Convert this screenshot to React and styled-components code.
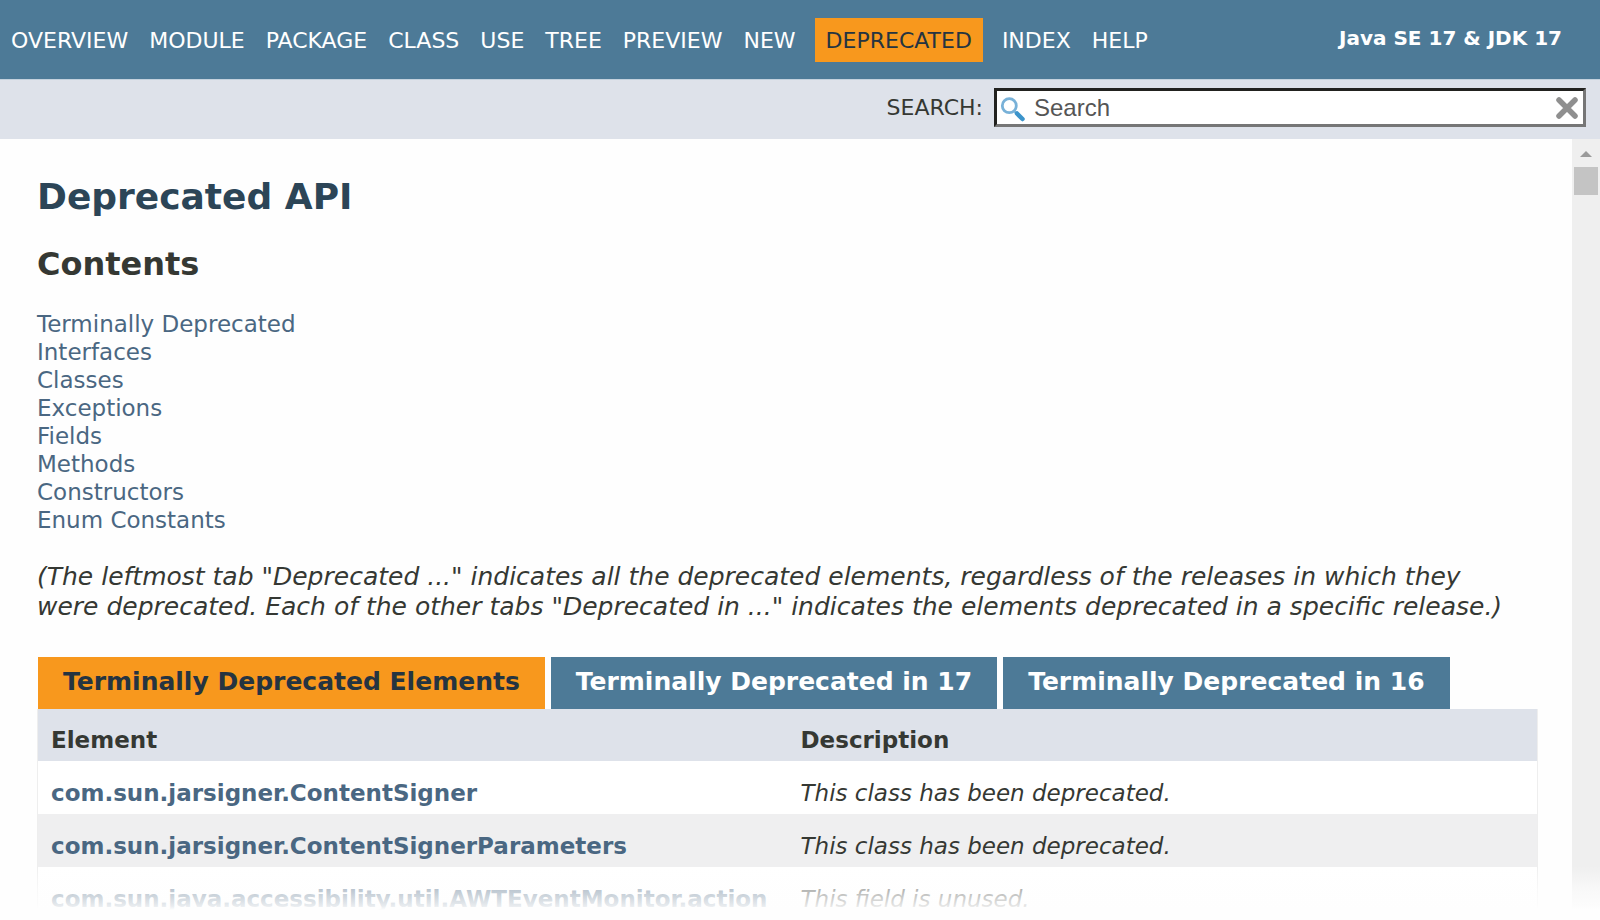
import React from "react";
import styled, { createGlobalStyle } from "styled-components";

const sans = '"DejaVu Sans", Arial, Helvetica, sans-serif';

const GlobalStyle = createGlobalStyle`
  *, *::before, *::after { box-sizing: border-box; }
  body {
    margin: 0;
    background: #fefefe;
    color: #353833;
    font-family: ${sans};
    font-size: 23px;
  }
`;

const Page = styled.div`
  position: relative;
  display: flex;
  flex-direction: column;
  height: 100vh;
  overflow: hidden;
`;

const TopBar = styled.header`
  display: flex;
  align-items: center;
  justify-content: space-between;
  flex: none;
  height: 80px;
  padding-right: 38px;
  border-bottom: 1px solid #c3d1dd;
  background: #4d7a97;
  color: #fff;
`;

const NavList = styled.ul`
  display: flex;
  align-items: center;
  gap: 21px;
  margin: 0;
  padding: 0 0 0 11px;
  list-style: none;
  font-size: 22px;
  line-height: 42px;
`;

const NavItem = styled.li`
  padding-top: 2px;
  ${(p) => p.$current && `
    margin: 0 -2px;
    padding: 2px 11px 0;
    background: #f8981d;
    color: #253441;
  `}
`;

const NavLink = styled.a`
  color: inherit;
  text-decoration: none;
`;

const Product = styled.strong`
  padding-bottom: 4px;
  font-size: 20px;
  line-height: 24px;
  white-space: nowrap;
`;

const SearchBar = styled.form`
  display: flex;
  align-items: center;
  justify-content: flex-end;
  gap: 11px;
  flex: none;
  height: 59px;
  padding: 0 14px 4px 0;
  background: #dee2ea;
`;

const SearchLabel = styled.label`
  font-size: 22px;
`;

const SearchField = styled.div`
  display: flex;
  align-items: center;
  width: 37vw;
  height: 39px;
  padding: 0 5px 0 3px;
  border: 3px solid;
  border-color: #22221f #767676 #767676 #22221f;
  background: #fff;
`;

const SearchInput = styled.input`
  flex: 1;
  min-width: 0;
  height: 32px;
  margin: 0 0 0 8px;
  padding: 0;
  border: 0;
  outline: 0;
  background: transparent;
  font: 24px "Liberation Sans", Arial, sans-serif;
  &::placeholder { color: #555; opacity: 1; }
`;

const ResetButton = styled.button`
  display: flex;
  padding: 0;
  border: 0;
  background: none;
`;

const Body = styled.div`
  display: flex;
  flex: 1;
  min-height: 0;
`;

const Main = styled.main`
  flex: 1;
  min-width: 0;
  padding: 36px 34px 0 37px;
  overflow: hidden;
`;

const Title = styled.h1`
  margin: 0 0 25px;
  color: #2c4557;
  font-size: 36px;
  line-height: 44px;
`;

const Subtitle = styled.h2`
  margin: 0 0 26px;
  font-size: 32px;
  line-height: 40px;
`;

const Contents = styled.ul`
  margin: 0 0 28px;
  padding: 0;
  list-style: none;
  line-height: 28px;
`;

const TextLink = styled.a`
  color: #4a6782;
  text-decoration: none;
`;

const Note = styled.p`
  margin: 0 0 35px;
  padding-right: 16px;
  font-size: 25px;
  font-style: italic;
  line-height: 30px;
`;

const Tabs = styled.div`
  display: flex;
  gap: 6px;
  padding-left: 1px;
`;

const Tab = styled.button`
  height: 52px;
  padding: 0 25px 3px;
  border: 0;
  background: ${(p) => (p.$active ? "#f8981d" : "#4d7a97")};
  color: ${(p) => (p.$active ? "#253441" : "#fff")};
  font: bold 25px ${sans};
  white-space: nowrap;
`;

const Table = styled.table`
  width: 100%;
  table-layout: fixed;
  border: 1px solid #eee;
  border-top: 0;
  border-spacing: 0;
`;

const HeadCell = styled.th`
  height: 52px;
  padding: 10px 0 0 13px;
  background: #dee2ea;
  text-align: left;
  line-height: 28px;
`;

const Row = styled.tr`
  background: ${(p) => (p.$shaded ? "#efeff0" : "#fff")};
`;

const Cell = styled.td`
  height: 53px;
  padding: 10px 0 0 13px;
  font-style: ${(p) => (p.$italic ? "italic" : "normal")};
  font-weight: ${(p) => (p.$bold ? "bold" : "normal")};
  line-height: 28px;
  white-space: nowrap;
`;

const Scrollbar = styled.div`
  display: flex;
  flex: none;
  flex-direction: column;
  align-items: center;
  gap: 10px;
  width: 28px;
  padding-top: 12px;
  background: #efefef;
`;

const Thumb = styled.div`
  width: 24px;
  height: 28px;
  background: #c4c4c4;
`;

const Fade = styled.div`
  position: absolute;
  inset: auto 0 0 0;
  height: 56px;
  background: linear-gradient(
    rgba(254, 254, 254, 0) 2px,
    rgba(254, 254, 254, 0.64) 26px,
    rgba(254, 254, 254, 0.88) 42px,
    #fefefe 46px
  );
  pointer-events: none;
`;

const navItems = ["OVERVIEW", "MODULE", "PACKAGE", "CLASS", "USE", "TREE", "PREVIEW", "NEW", "DEPRECATED", "INDEX", "HELP"];

const sections = ["Terminally Deprecated", "Interfaces", "Classes", "Exceptions", "Fields", "Methods", "Constructors", "Enum Constants"];

const tabs = ["Terminally Deprecated Elements", "Terminally Deprecated in 17", "Terminally Deprecated in 16"];

const rows = [
  ["com.sun.jarsigner.ContentSigner", "This class has been deprecated."],
  ["com.sun.jarsigner.ContentSignerParameters", "This class has been deprecated."],
  ["com.sun.java.accessibility.util.AWTEventMonitor.action", "This field is unused."],
];

const MagnifierIcon = () => (
  <svg width="26" height="30" viewBox="0 0 26 30" fill="none" aria-hidden="true">
    <circle cx="9.3" cy="12.7" r="7" stroke="#78b1d8" strokeWidth="2.8" />
    <path d="M14 18l3 3" stroke="#78b1d8" strokeWidth="2" />
    <path d="M17 20.5l5.5 5.5" stroke="#3c94cb" strokeWidth="4.5" strokeLinecap="round" />
  </svg>
);

const CrossIcon = () => (
  <svg width="22" height="22" viewBox="0 0 22 22" aria-hidden="true">
    <path d="M3 3l16 16M19 3L3 19" stroke="#8f8f8f" strokeWidth="5.5" strokeLinecap="round" />
  </svg>
);

export default function App() {
  return (
    <Page>
      <GlobalStyle />
      <TopBar>
        <nav>
          <NavList>
            {navItems.map((name) => (
              <NavItem key={name} $current={name === "DEPRECATED"}>
                {name === "DEPRECATED" ? name : <NavLink href="#">{name}</NavLink>}
              </NavItem>
            ))}
          </NavList>
        </nav>
        <Product>Java SE 17 &amp; JDK 17</Product>
      </TopBar>
      <SearchBar>
        <SearchLabel htmlFor="search">SEARCH:</SearchLabel>
        <SearchField>
          <MagnifierIcon />
          <SearchInput id="search" type="text" placeholder="Search" />
          <ResetButton type="reset" aria-label="Reset">
            <CrossIcon />
          </ResetButton>
        </SearchField>
      </SearchBar>
      <Body>
        <Main>
          <Title>Deprecated API</Title>
          <Subtitle>Contents</Subtitle>
          <Contents>
            {sections.map((name) => (
              <li key={name}>
                <TextLink href="#">{name}</TextLink>
              </li>
            ))}
          </Contents>
          <Note>
            (The leftmost tab "Deprecated ..." indicates all the deprecated elements, regardless of the releases in
            which they were deprecated. Each of the other tabs "Deprecated in ..." indicates the elements deprecated in
            a specific release.)
          </Note>
          <Tabs role="tablist">
            {tabs.map((name, i) => (
              <Tab key={name} type="button" role="tab" aria-selected={i === 0} $active={i === 0}>
                {name}
              </Tab>
            ))}
          </Tabs>
          <Table>
            <thead>
              <tr>
                <HeadCell scope="col">Element</HeadCell>
                <HeadCell scope="col">Description</HeadCell>
              </tr>
            </thead>
            <tbody>
              {rows.map(([element, description], i) => (
                <Row key={element} $shaded={i % 2 === 1}>
                  <Cell $bold>
                    <TextLink href="#">{element}</TextLink>
                  </Cell>
                  <Cell $italic>{description}</Cell>
                </Row>
              ))}
            </tbody>
          </Table>
        </Main>
        <Scrollbar aria-hidden="true">
          <svg width="12" height="6" viewBox="0 0 12 6">
            <path d="M6 0l6 6H0z" fill="#9a9a9a" />
          </svg>
          <Thumb />
        </Scrollbar>
      </Body>
      <Fade />
    </Page>
  );
}
